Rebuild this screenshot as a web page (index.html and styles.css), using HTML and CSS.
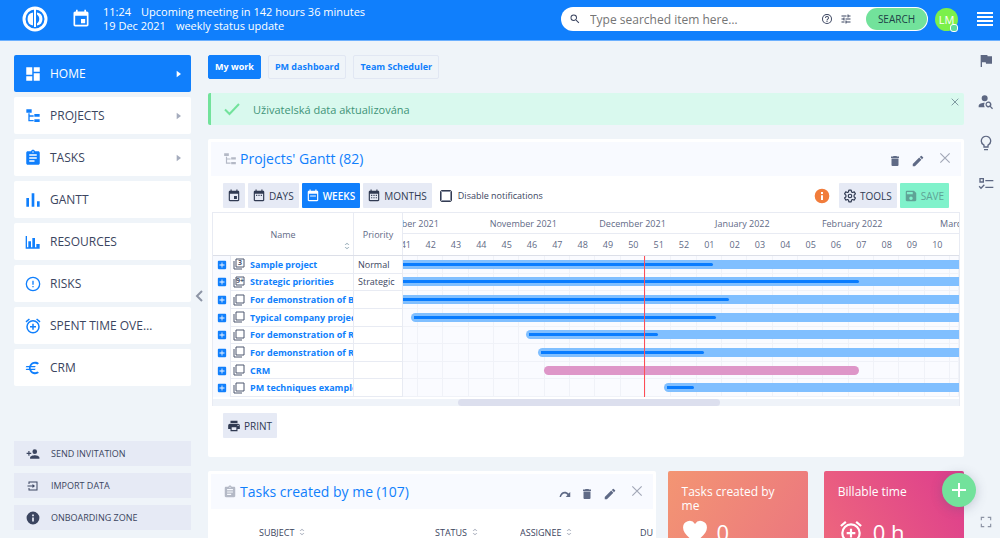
FILE: index.html
```html
<!DOCTYPE html>
<html lang="en">
<head>
<meta charset="utf-8">
<meta name="viewport" content="width=device-width, initial-scale=1">
<title>Home - My work</title>
<link rel="stylesheet" href="styles.css">
</head>
<body>
<svg class="sprite" aria-hidden="true">
  <symbol id="i-event" viewBox="0 0 24 24"><path d="M17 12h-5v5h5v-5zM16 1v2H8V1H6v2H5c-1.1 0-2 .9-2 2v14c0 1.100.9 2 2 2h14c1.100 0 2-.9 2-2V5c0-1.100-.9-2-2-2h-1V1h-2zm3 18H5V8h14v11z"/></symbol>
  <symbol id="i-days" viewBox="0 0 24 24"><path d="M16 1v2H8V1H6v2H5c-1.1 0-2 .9-2 2v14c0 1.100.9 2 2 2h14c1.100 0 2-.9 2-2V5c0-1.100-.9-2-2-2h-1V1h-2zm3 18H5V8h14v11zM7 10h2v2H7zm4 0h2v2h-2zm4 0h2v2h-2z"/></symbol>
  <symbol id="i-weeks" viewBox="0 0 24 24"><path d="M16 1v2H8V1H6v2H5c-1.1 0-2 .9-2 2v14c0 1.100.9 2 2 2h14c1.100 0 2-.9 2-2V5c0-1.100-.9-2-2-2h-1V1h-2zm3 18H5V8h14v11zM7 11h10v2H7z"/></symbol>
  <symbol id="i-months" viewBox="0 0 24 24"><path d="M16 1v2H8V1H6v2H5c-1.1 0-2 .9-2 2v14c0 1.100.9 2 2 2h14c1.100 0 2-.9 2-2V5c0-1.100-.9-2-2-2h-1V1h-2zm3 18H5V8h14v11zM7 10h2v2H7zm4 0h2v2h-2zm4 0h2v2h-2zM7 14h2v2H7zm4 0h2v2h-2zm4 0h2v2h-2z"/></symbol>
  <symbol id="i-search" viewBox="0 0 24 24"><path d="M15.500 14h-.79l-.28-.27A6.470 6.470 0 0 0 16 9.500 6.500 6.500 0 1 0 9.500 16c1.610 0 3.090-.59 4.230-1.570l.27.28v.79l5 4.990L20.490 19l-4.990-5zm-6 0C7.010 14 5 11.990 5 9.500S7.010 5 9.500 5 14 7.010 14 9.500 11.990 14 9.500 14z"/></symbol>
  <symbol id="i-help" viewBox="0 0 24 24"><path d="M11 18h2v-2h-2v2zm1-16a10 10 0 1 0 0 20 10 10 0 0 0 0-20zm0 18a8 8 0 1 1 0-16 8 8 0 0 1 0 16zm0-14a4 4 0 0 0-4 4h2c0-1.100.9-2 2-2s2 .9 2 2c0 2-3 1.750-3 5h2c0-2.250 3-2.500 3-5a4 4 0 0 0-4-4z"/></symbol>
  <symbol id="i-tune" viewBox="0 0 24 24"><path d="M3 17v2h6v-2H3zM3 5v2h10V5H3zm10 16v-2h8v-2h-8v-2h-2v6h2zM7 9v2H3v2h4v2h2V9H7zm14 4v-2H11v2h10zm-6-4h2V7h4V5h-4V3h-2v6z"/></symbol>
  <symbol id="i-dash" viewBox="0 0 24 24"><path d="M3 13h8V3H3v10zm0 8h8v-6H3v6zm10 0h8V11h-8v10zm0-18v6h8V3h-8z"/></symbol>
  <symbol id="i-tree" viewBox="0 0 24 24"><path d="M2 2h8v5H2zM14 9h8v4h-8zM14 17h8v4h-8zM5 8h2v3h6v2H7v5h6v2H5z"/></symbol>
  <symbol id="i-task" viewBox="0 0 24 24"><path d="M19 3h-4.180C14.400 1.840 13.300 1 12 1s-2.400.84-2.820 2H5c-1.100 0-2 .9-2 2v14c0 1.100.9 2 2 2h14c1.100 0 2-.9 2-2V5c0-1.100-.9-2-2-2zm-7 0a1 1 0 1 1 0 2 1 1 0 0 1 0-2zm2 14H7v-2h7v2zm3-4H7v-2h10v2zm0-4H7V7h10v2z"/></symbol>
  <symbol id="i-bars" viewBox="0 0 24 24"><path d="M2 9h4v13H2zM10 2h4v20h-4zM18 14h4v8h-4z"/></symbol>
  <symbol id="i-res" viewBox="0 0 24 24"><path d="M1 3h2v17h2V11h4v9h2V6h4v14h2v-5h5v7H1z"/></symbol>
  <symbol id="i-risk" viewBox="0 0 24 24"><path d="M11 15h2v2h-2zm0-8h2v6h-2zM12 1a11 11 0 1 0 0 22 11 11 0 0 0 0-22zm0 20a9 9 0 1 1 0-18 9 9 0 0 1 0 18z"/></symbol>
  <symbol id="i-alarm" viewBox="0 0 24 24"><path d="M7.880 3.390 6.600 1.860 2 5.710l1.290 1.530 4.590-3.850zM22 5.720l-4.600-3.860-1.290 1.530 4.600 3.860L22 5.720zM12 4a9 9 0 1 0 0 18 9 9 0 0 0 0-18zm0 16a7 7 0 1 1 0-14 7 7 0 0 1 0 14zm1-11h-2v3H8v2h3v3h2v-3h3v-2h-3V9z"/></symbol>
  <symbol id="i-euro" viewBox="0 0 24 24"><path d="M15 18.500A6.480 6.480 0 0 1 9.240 15H15l1-2H8.580a6.700 6.700 0 0 1 0-2H15l1-2H9.240a6.490 6.490 0 0 1 9.370-2.390L21 4.800A8.960 8.960 0 0 0 6.520 9H2l-1 2h5.060a9.300 9.300 0 0 0 0 2H2l-1 2h5.520A8.990 8.990 0 0 0 21 19.200l-2.400-1.800a6.400 6.400 0 0 1-3.600 1.100z"/></symbol>
  <symbol id="i-adduser" viewBox="0 0 24 24"><path d="M15 12a4 4 0 1 0 0-8 4 4 0 0 0 0 8zm-9-2V7H4v3H1v2h3v3h2v-3h3v-2H6zm9 4c-2.670 0-8 1.340-8 4v2h16v-2c0-2.660-5.330-4-8-4z"/></symbol>
  <symbol id="i-import" viewBox="0 0 24 24"><path d="M3 3h18v18H3v-5h2v3h14V5H5v3H3zM1 11h10V8l5 4-5 4v-3H1z"/></symbol>
  <symbol id="i-info" viewBox="0 0 24 24"><path d="M12 1a11 11 0 1 0 0 22 11 11 0 0 0 0-22zm1.500 17h-3v-7h3v7zm0-9h-3V6h3v3z"/></symbol>
  <symbol id="i-flag" viewBox="0 0 24 24"><path d="M14.400 5 14 3H4v18h2v-7h5.600l.4 2h9V5z"/></symbol>
  <symbol id="i-usersearch" viewBox="0 0 24 24"><path d="M10 11a4.500 4.500 0 1 0 0-9 4.500 4.500 0 0 0 0 9zM10 13c-4 0-9 1.500-9 5v2h9a7 7 0 0 1 0-7zM22.500 21.500l-3.100-3.200a4.500 4.500 0 1 0-1.400 1.300l3.100 3.200zM15.500 18a2.500 2.500 0 1 1 0-5 2.500 2.500 0 0 1 0 5z"/></symbol>
  <symbol id="i-bulb" viewBox="0 0 24 24"><path d="M9 21h6v2H9zM12 1a8 8 0 0 0-4 14.900V19h8v-3.100A8 8 0 0 0 12 1zm2.600 13.200-.6.400V17h-4v-2.400l-.6-.4a6 6 0 1 1 5.200 0z"/></symbol>
  <symbol id="i-checks" viewBox="0 0 24 24"><path d="M11 6h12v2H11zM11 16h12v2H11zM2 3h7v7H2zm2 2v3h3V5zM1 16l1.400-1.400L4.500 17 8.800 12.500 10.200 14 4.500 20z"/></symbol>
  <symbol id="i-full" viewBox="0 0 24 24"><path d="M3 3h6v2H5v4H3zM15 3h6v6h-2V5h-4zM3 15h2v4h4v2H3zM19 15h2v6h-6v-2h4z"/></symbol>
  <symbol id="i-trash" viewBox="0 0 24 24"><path d="M5 7h14v13a2 2 0 0 1-2 2H7a2 2 0 0 1-2-2zM4 3h4l1-1h6l1 1h4v3H4z"/></symbol>
  <symbol id="i-pen" viewBox="0 0 24 24"><path d="M3 17.250V21h3.750L17.810 9.940l-3.750-3.750L3 17.250zM20.710 7.040a1 1 0 0 0 0-1.410l-2.340-2.340a1 1 0 0 0-1.410 0l-1.830 1.830 3.750 3.750 1.830-1.830z"/></symbol>
  <symbol id="i-close" viewBox="0 0 24 24"><path d="M4 4 20 20M20 4 4 20" fill="none" stroke="currentColor" stroke-width="2"/></symbol>
  <symbol id="i-redo" viewBox="0 0 24 24"><path d="M1 18C3 6 14 5 19 11l3.500-3v10h-9l3.500-4C12 9 6 11 4 18z"/></symbol>
  <symbol id="i-gear" viewBox="0 0 24 24"><path d="M10 2h4l.6 3 1.800 1 2.900-1 2 3.400L19 10.500v3l2.300 2-2 3.500-2.900-1-1.800 1-.6 3h-4l-.6-3-1.800-1-2.900 1-2-3.500 2.300-2v-3l-2.300-2.100 2-3.400 2.900 1 1.800-1z" fill="none" stroke="currentColor" stroke-width="2" stroke-linejoin="round"/><circle cx="12" cy="12" r="3" fill="none" stroke="currentColor" stroke-width="2"/></symbol>
  <symbol id="i-save" viewBox="0 0 24 24"><path d="M17 3H5a2 2 0 0 0-2 2v14c0 1.100.9 2 2 2h14c1.100 0 2-.9 2-2V7l-4-4zm-5 16a3 3 0 1 1 0-6 3 3 0 0 1 0 6zm3-10H5V5h10v4z"/></symbol>
  <symbol id="i-print" viewBox="0 0 24 24"><path d="M19 8H5a3 3 0 0 0-3 3v6h4v4h12v-4h4v-6a3 3 0 0 0-3-3zm-3 11H8v-5h8v5zm3-7a1 1 0 1 1 0-2 1 1 0 0 1 0 2zm-1-9H6v4h12V3z"/></symbol>
  <symbol id="i-copy" viewBox="0 0 24 24"><path d="M6 2h16v16H6zM2 6v16h16" fill="none" stroke="currentColor" stroke-width="2" stroke-linejoin="round"/></symbol>
  <symbol id="i-plusbox" viewBox="0 0 24 24"><path d="M4 2h16a2 2 0 0 1 2 2v16a2 2 0 0 1-2 2H4a2 2 0 0 1-2-2V4a2 2 0 0 1 2-2zm7 4v5H6v2h5v5h2v-5h5v-2h-5V6z"/></symbol>
  <symbol id="i-sort" viewBox="0 0 24 24"><path d="M5 9l7-7 7 7h-3l-4-4-4 4zM5 15h3l4 4 4-4h3l-7 7z"/></symbol>
  <symbol id="i-tri" viewBox="0 0 24 24"><path d="M5 2l13 10L5 22z"/></symbol>
  <symbol id="i-heart" viewBox="0 0 24 24"><path d="M12 22C5 16 1 12.500 1 8a6 6 0 0 1 11-3.500A6 6 0 0 1 23 8c0 4.500-4 8-11 14z"/></symbol>
</svg>

<header class="topbar">
  <a class="logo" href="#" aria-label="Home"><svg viewBox="0 0 26 26"><circle cx="13" cy="13" r="11" fill="none" stroke="currentColor" stroke-width="3"/><path d="M11 6.500a6.600 6.600 0 0 0 0 13z"/><path d="M12 3h2v18h-2z"/><path d="M15 6.500a6.600 6.600 0 0 1 0 13v-2c3-2 3-7 0-9z"/></svg></a>
  <svg class="icon meeting-icon"><use href="#i-event"/></svg>
  <div class="meeting">
    <div><span>11:24</span><span>Upcoming meeting in 142 hours 36 minutes</span></div>
    <div><span>19 Dec 2021</span><span>weekly status update</span></div>
  </div>
  <form class="search">
    <svg class="icon s12"><use href="#i-search"/></svg>
    <input type="text" aria-label="Search" placeholder="Type searched item here…">
    <svg class="icon s12"><use href="#i-help"/></svg>
    <svg class="icon s12"><use href="#i-tune"/></svg>
    <button type="button" class="search-btn">SEARCH</button>
  </form>
  <button type="button" class="avatar">LM<span class="status"></span></button>
  <button type="button" class="burger" aria-label="Menu"><i></i><i></i><i></i><i></i></button>
</header>

<div class="layout">
  <nav class="sidebar">
    <a class="nav-item active" href="#"><svg class="icon s18"><use href="#i-dash"/></svg><span>HOME</span><svg class="icon s8"><use href="#i-tri"/></svg></a>
    <a class="nav-item" href="#"><svg class="icon s16"><use href="#i-tree"/></svg><span>PROJECTS</span><svg class="icon s8"><use href="#i-tri"/></svg></a>
    <a class="nav-item" href="#"><svg class="icon s18"><use href="#i-task"/></svg><span>TASKS</span><svg class="icon s8"><use href="#i-tri"/></svg></a>
    <a class="nav-item" href="#"><svg class="icon s16"><use href="#i-bars"/></svg><span>GANTT</span></a>
    <a class="nav-item" href="#"><svg class="icon s16"><use href="#i-res"/></svg><span>RESOURCES</span></a>
    <a class="nav-item" href="#"><svg class="icon s16"><use href="#i-risk"/></svg><span>RISKS</span></a>
    <a class="nav-item" href="#"><svg class="icon s18"><use href="#i-alarm"/></svg><span>SPENT TIME OVE…</span></a>
    <a class="nav-item" href="#"><svg class="icon s16"><use href="#i-euro"/></svg><span>CRM</span></a>
    <div class="side-foot">
      <a class="foot-item" href="#"><svg class="icon s14"><use href="#i-adduser"/></svg>SEND INVITATION</a>
      <a class="foot-item" href="#"><svg class="icon s12"><use href="#i-import"/></svg>IMPORT DATA</a>
      <a class="foot-item" href="#"><svg class="icon s14"><use href="#i-info"/></svg>ONBOARDING ZONE</a>
    </div>
  </nav>
  <button type="button" class="collapse" aria-label="Collapse sidebar"><svg viewBox="0 0 8 12"><path d="M7 1 2 6l5 5" fill="none" stroke="currentColor" stroke-width="2"/></svg></button>

  <main class="main">
    <div class="tabs">
      <a class="tab current" href="#">My work</a>
      <a class="tab" href="#">PM dashboard</a>
      <a class="tab" href="#">Team Scheduler</a>
    </div>

    <div class="notice">
      <svg class="check" viewBox="0 0 18 14"><path d="M2 7.500 6.500 12 16 2" fill="none" stroke="currentColor" stroke-width="2"/></svg>
      <span>Uživatelská data aktualizována</span>
      <button type="button" aria-label="Dismiss"><svg class="icon s10"><use href="#i-close"/></svg></button>
    </div>

    <section class="card">
      <header class="card-head">
        <svg class="icon s14 muted"><use href="#i-tree"/></svg>
        <h2><a href="#">Projects' Gantt (82)</a></h2>
        <div class="tools">
          <button type="button" aria-label="Delete"><svg class="icon s12"><use href="#i-trash"/></svg></button>
          <button type="button" aria-label="Edit"><svg class="icon s14"><use href="#i-pen"/></svg></button>
          <button type="button" class="x" aria-label="Close"><svg class="icon s14"><use href="#i-close"/></svg></button>
        </div>
      </header>
      <div class="toolbar">
        <button type="button" class="btn only" aria-label="Today"><svg class="icon s14"><use href="#i-event"/></svg></button>
        <button type="button" class="btn"><svg class="icon s14"><use href="#i-days"/></svg>DAYS</button>
        <button type="button" class="btn on"><svg class="icon s14"><use href="#i-weeks"/></svg>WEEKS</button>
        <button type="button" class="btn"><svg class="icon s14"><use href="#i-months"/></svg>MONTHS</button>
        <label class="check-label"><input type="checkbox">Disable notifications</label>
        <svg class="icon info"><use href="#i-info"/></svg>
        <button type="button" class="btn"><svg class="icon s14"><use href="#i-gear"/></svg>TOOLS</button>
        <button type="button" class="btn save" disabled><svg class="icon s14"><use href="#i-save"/></svg>SAVE</button>
      </div>

      <div class="gantt">
        <table class="names">
          <thead><tr><th>Name<svg class="icon s8 sort"><use href="#i-sort"/></svg></th><th>Priority</th></tr></thead>
          <tbody>
            <tr><td><svg class="icon s10"><use href="#i-plusbox"/></svg></td><td><span class="copy"><svg class="icon s12"><use href="#i-copy"/></svg><b>3</b></span><a href="#">Sample project</a></td><td>Normal</td></tr>
            <tr><td><svg class="icon s10"><use href="#i-plusbox"/></svg></td><td><span class="copy"><svg class="icon s12"><use href="#i-copy"/></svg><b>9+</b></span><a href="#">Strategic priorities</a></td><td>Strategic</td></tr>
            <tr><td><svg class="icon s10"><use href="#i-plusbox"/></svg></td><td><span class="copy"><svg class="icon s12"><use href="#i-copy"/></svg></span><a href="#">For demonstration of Budgets</a></td><td></td></tr>
            <tr><td><svg class="icon s10"><use href="#i-plusbox"/></svg></td><td><span class="copy"><svg class="icon s12"><use href="#i-copy"/></svg></span><a href="#">Typical company project</a></td><td></td></tr>
            <tr><td><svg class="icon s10"><use href="#i-plusbox"/></svg></td><td><span class="copy"><svg class="icon s12"><use href="#i-copy"/></svg></span><a href="#">For demonstration of Risks</a></td><td></td></tr>
            <tr><td><svg class="icon s10"><use href="#i-plusbox"/></svg></td><td><span class="copy"><svg class="icon s12"><use href="#i-copy"/></svg></span><a href="#">For demonstration of Resources</a></td><td></td></tr>
            <tr><td><svg class="icon s10"><use href="#i-plusbox"/></svg></td><td><span class="copy"><svg class="icon s12"><use href="#i-copy"/></svg></span><a href="#">CRM</a></td><td></td></tr>
            <tr><td><svg class="icon s10"><use href="#i-plusbox"/></svg></td><td><span class="copy"><svg class="icon s12"><use href="#i-copy"/></svg></span><a href="#">PM techniques example</a></td><td></td></tr>
          </tbody>
        </table>
        <div class="timeline">
          <div class="months"><span>October 2021</span><span>November 2021</span><span>December 2021</span><span>January 2022</span><span>February 2022</span><span>March 2022</span></div>
          <div class="weeks"><span>41</span><span>42</span><span>43</span><span>44</span><span>45</span><span>46</span><span>47</span><span>48</span><span>49</span><span>50</span><span>51</span><span>52</span><span>01</span><span>02</span><span>03</span><span>04</span><span>05</span><span>06</span><span>07</span><span>08</span><span>09</span><span>10</span><span></span></div>
          <div class="chart">
            <div class="gridlines"><i></i><i></i><i></i><i></i><i></i><i></i><i></i><i></i><i></i><i></i><i></i><i></i><i></i><i></i><i></i><i></i><i></i><i></i><i></i><i></i><i></i><i></i><i></i></div>
            <div class="lane"><div class="bar open" style="margin-left:0%;width:100%"><i style="width:55.8%"></i></div></div>
            <div class="lane"><div class="bar open" style="margin-left:0%;width:100%"><i style="width:82.1%"></i></div></div>
            <div class="lane"><div class="bar open" style="margin-left:0%;width:100%"><i style="width:58.7%"></i></div></div>
            <div class="lane"><div class="bar" style="margin-left:1.4%;width:98.6%"><i style="width:55.5%"></i></div></div>
            <div class="lane"><div class="bar" style="margin-left:22.2%;width:77.8%"><i style="width:30%"></i></div></div>
            <div class="lane"><div class="bar" style="margin-left:24.2%;width:75.8%"><i style="width:39%"></i></div></div>
            <div class="lane"><div class="bar pink" style="margin-left:25.4%;width:56.7%"></div></div>
            <div class="lane"><div class="bar" style="margin-left:47%;width:53%"><i style="width:9%"></i></div></div>
            <div class="today" style="left:43.4%"></div>
          </div>
        </div>
        <div class="scroll"><div style="margin-left:32.8%;width:35.2%"></div></div>
      </div>
      <div class="card-foot"><button type="button" class="btn"><svg class="icon s14"><use href="#i-print"/></svg>PRINT</button></div>
    </section>

    <div class="row">
      <section class="card tasks">
        <header class="card-head">
          <svg class="icon s14 muted"><use href="#i-task"/></svg>
          <h2><a href="#">Tasks created by me (107)</a></h2>
          <div class="tools">
            <button type="button" aria-label="Move"><svg class="icon s12"><use href="#i-redo"/></svg></button>
            <button type="button" aria-label="Delete"><svg class="icon s12"><use href="#i-trash"/></svg></button>
            <button type="button" aria-label="Edit"><svg class="icon s14"><use href="#i-pen"/></svg></button>
            <button type="button" class="x" aria-label="Close"><svg class="icon s14"><use href="#i-close"/></svg></button>
          </div>
        </header>
        <table class="task-table"><thead><tr><th>SUBJECT<svg class="icon s8"><use href="#i-sort"/></svg></th><th>STATUS<svg class="icon s8"><use href="#i-sort"/></svg></th><th>ASSIGNEE<svg class="icon s8"><use href="#i-sort"/></svg></th><th>DUE DATE</th></tr></thead></table>
      </section>
      <div class="stats">
        <section class="stat coral"><h3>Tasks created by me</h3><p><svg class="icon s26"><use href="#i-heart"/></svg>0</p></section>
        <section class="stat rose"><h3>Billable time</h3><p class="low"><svg class="icon s26"><use href="#i-alarm"/></svg>0 h</p></section>
      </div>
    </div>
  </main>

  <aside class="rail">
    <button type="button" aria-label="Flag"><svg class="icon s16"><use href="#i-flag"/></svg></button>
    <button type="button" aria-label="Find user"><svg class="icon s16"><use href="#i-usersearch"/></svg></button>
    <button type="button" aria-label="Ideas"><svg class="icon s16"><use href="#i-bulb"/></svg></button>
    <button type="button" aria-label="To do"><svg class="icon s16"><use href="#i-checks"/></svg></button>
    <button type="button" class="full" aria-label="Full screen"><svg class="icon s14"><use href="#i-full"/></svg></button>
  </aside>
</div>
<button type="button" class="fab" aria-label="Add"><svg viewBox="0 0 14 14"><path d="M7 0v14M0 7h14" fill="none" stroke="currentColor" stroke-width="2"/></svg></button>
</body>
</html>
```
FILE: styles.css
```css
:root {
  --blue: #107ffc;
  --ink: #3b4560;
  --muted: #5f6a86;
  --line: #e8ebf3;
  --btn: #e6eaf5;
  --green: #72e29b;
}
* { box-sizing: border-box; }
body {
  margin: 0;
  height: 100vh;
  overflow: hidden;
  display: flex;
  flex-direction: column;
  background: #eff4f9;
  color: var(--ink);
  font-family: "Open Sans", "Noto Sans", sans-serif;
  font-size: 11px;
}
button { border: 0; padding: 0; background: none; color: inherit; font: inherit; cursor: pointer; }
a { color: inherit; text-decoration: none; }
h2, h3, p { margin: 0; font-weight: 400; }
.sprite { position: absolute; width: 0; height: 0; }
.icon { fill: currentColor; flex: none; display: block; }
.s8 { width: 8px; height: 8px; }
.s10 { width: 10px; height: 10px; }
.s12 { width: 12px; height: 12px; }
.s14 { width: 14px; height: 14px; }
.s16 { width: 16px; height: 16px; }
.s18 { width: 18px; height: 18px; }
.s26 { width: 26px; height: 26px; }

.topbar {
  flex: none;
  height: 41px;
  display: flex;
  align-items: center;
  padding: 0 7px 2px 22px;
  background: var(--blue);
  border-bottom: 1px solid #6cb0ff;
  color: #fff;
}
.logo { width: 26px; height: 26px; }
.logo svg { display: block; fill: #fff; }
.meeting-icon { width: 20px; height: 20px; margin-left: 23px; }
.meeting { margin-left: 12px; line-height: 14px; font-size: 11px; font-weight: 600; }
.meeting div { display: flex; gap: 10px; white-space: nowrap; font-weight: 500; }
.search {
  margin-left: auto;
  width: 367px;
  height: 24px;
  display: flex;
  align-items: center;
  gap: 7px;
  padding: 1px 1px 1px 8px;
  background: #fff;
  border-radius: 12px;
  color: var(--ink);
}
.search input {
  flex: 1;
  min-width: 0;
  border: 0;
  padding: 0 0 0 2px;
  background: none;
  font: inherit;
  font-size: 12px;
  outline: 0;
}
.search input::placeholder { color: #757575; opacity: 1; }
.search-btn { width: 61px; height: 22px; margin-left: 7px; border-radius: 11px; background: var(--green); color: #1d3f48; font-size: 10px; font-weight: 500; }
.avatar { position: relative; width: 23px; height: 23px; margin-left: 7px; border-radius: 50%; background: #7cf04a; color: #fff; font-size: 11px; }
.status { position: absolute; right: 0; bottom: -1px; width: 8px; height: 8px; border: 1px solid #fff; border-radius: 3px; background: #5fdc9c; }
.burger { display: grid; gap: 2px; width: 16px; margin-left: 19px; }
.burger i { height: 2px; background: #fff; }

.layout { flex: 1; min-height: 0; display: flex; }
.sidebar { flex: none; width: 191px; padding: 14px 0 8px 14px; display: flex; flex-direction: column; gap: 5px; }
.nav-item {
  height: 37px;
  display: grid;
  grid-template-columns: 18px 1fr 8px;
  align-items: center;
  justify-items: start;
  column-gap: 8px;
  padding: 0 8px 0 10px;
  background: #fff;
  border-radius: 2px;
  font-size: 12px;
  font-weight: 500;
  white-space: nowrap;
}
.nav-item .icon { color: var(--blue); justify-self: center; }
.nav-item .s8 { color: #a5acbd; }
.nav-item.active, .nav-item.active .icon { color: #fff; }
.nav-item.active { background: var(--blue); }
.side-foot { margin-top: auto; display: flex; flex-direction: column; gap: 7px; }
.foot-item {
  height: 25px;
  display: grid;
  grid-template-columns: 14px 1fr;
  column-gap: 11px;
  align-items: center;
  padding-left: 12px;
  background: var(--btn);
  font-size: 9px;
  font-weight: 500;
}
.foot-item .icon { justify-self: center; }
.collapse { flex: none; width: 17px; color: #8d94a5; }
.collapse svg { width: 8px; height: 12px; display: block; margin: 12px 0 0 4px; }

.main { flex: 1; min-width: 0; padding-top: 14px; display: flex; flex-direction: column; gap: 14px; }
.main > * { flex: none; }
.tabs { display: flex; gap: 7px; }
.tab { height: 24px; line-height: 22px; padding: 0 6px; border: 1px solid #e1e7f3; border-radius: 2px; color: var(--blue); font-size: 9px; font-weight: 700; }
.tab.current { background: var(--blue); border-color: var(--blue); color: #fff; }
.notice { height: 32px; display: flex; align-items: center; gap: 12px; padding: 0 4px 0 12px; background: #d9f9ee; border-left: 3px solid var(--green); border-radius: 2px; color: #3f9478; font-size: 11px; font-weight: 500; }
.check { width: 18px; height: 14px; color: var(--green); }
.notice button { margin: 4px 0 auto auto; color: #6d8791; }

.card { background: #fff; border-radius: 2px; padding: 3px; min-width: 0; }
.card-head { height: 34px; display: flex; align-items: center; gap: 3px; padding: 0 8px 0 12px; background: #f8faff; color: var(--muted); }
.card-head h2 { color: var(--blue); font-size: 14px; font-weight: 500; line-height: 20px; white-space: nowrap; }
.muted { color: #b4b9c6; }
.tools { margin-left: auto; display: flex; align-items: center; gap: 10px; padding-top: 4px; }
.tools .x { margin: -6px 1px 0 3px; color: #a2a8b7; }

.toolbar { display: flex; align-items: center; gap: 3px; padding: 7px 12px 4px; }
.btn { height: 25px; display: inline-flex; align-items: center; gap: 3px; padding: 0 5px 0 4px; background: var(--btn); border-radius: 1px; font-size: 10px; font-weight: 500; color: #303a52; }
.btn.only { padding: 0 4px; }
.btn.on { background: var(--blue); color: #fff; font-weight: 600; }
.btn.save { background: #80f2cb; color: #5fa396; }
.check-label { display: flex; align-items: center; gap: 6px; margin: 0 auto 0 5px; font-size: 9px; font-weight: 500; white-space: nowrap; }
.check-label input { appearance: none; width: 12px; height: 12px; margin: 0; border: 1px solid #333c52; border-radius: 2px; outline: 1px solid #8a91a3; outline-offset: -2px; background: #fff; }
.info { width: 16px; height: 16px; margin-right: 6px; color: #f17c3b; }

.gantt {
  margin: 0 1px;
  display: grid;
  grid-template-columns: 190px minmax(0, 1fr);
  border: 1px solid var(--line);
  border-bottom: 0;
  font-size: 9px;
  font-weight: 500;
}
.names { display: block; }
.names thead, .names th, .names td { display: block; }
.names thead { height: 43px; border-bottom: 1px solid #dcdfe8; }
.names tr { display: grid; }
.names thead tr { grid-template-columns: 141px 49px; height: 42px; }
.names th { display: flex; align-items: center; justify-content: center; position: relative; padding: 0; border-right: 1px solid var(--line); font-weight: 500; color: var(--muted); }
.names .sort { position: absolute; right: 2px; bottom: 5px; color: #8fa6b3; }
.names tbody { display: grid; grid-template-rows: repeat(8, 1fr); height: 141px; }
.names tbody tr { grid-template-columns: 18px 123px 49px; min-height: 0; }
.names td { display: flex; align-items: center; min-width: 0; overflow: hidden; padding: 0; border-right: 1px solid var(--line); border-bottom: 1px solid var(--line); white-space: nowrap; }
.names td:first-child { justify-content: center; background: #f8faff; color: var(--blue); border-bottom: 0; }
.names td:nth-child(2) { gap: 5px; padding-left: 2px; }
.names td:nth-child(3) { padding-left: 4px; }
.names td a { color: var(--blue); font-weight: 700; }
.copy { position: relative; flex: none; color: #4c566f; }
.copy b { position: absolute; top: 0; left: 3px; width: 8px; text-align: center; font-size: 7px; line-height: 10px; }

.timeline { min-width: 0; color: var(--muted); }
.months, .weeks, .gridlines { display: grid; }
.months { height: 21px; grid-template-columns: 66fr 109fr 110fr 110fr 110fr 52fr; border-bottom: 1px solid var(--line); overflow: hidden; }
.months span, .weeks span { display: flex; align-items: center; justify-content: center; min-width: 0; overflow: hidden; white-space: nowrap; }
.months span:first-child { justify-content: flex-end; padding-right: 30px; }
.months span:last-child { justify-content: flex-start; padding-left: 33px; }
.weeks, .gridlines { grid-template-columns: 15px repeat(21, minmax(0, 1fr)) 9px; }
.weeks { height: 22px; border-bottom: 1px solid #dcdfe8; }
.weeks span:first-child { justify-content: flex-end; padding-right: 7px; }
.chart { position: relative; height: 141px; display: grid; grid-template-rows: repeat(8, 1fr); background: #fafbff; overflow: hidden; }
.gridlines { position: absolute; inset: 0; }
.gridlines i { border-right: 1px solid #f0f2f8; }
.lane { min-height: 0; display: flex; align-items: center; border-bottom: 1px solid #f0f2f8; }
.bar { position: relative; height: 9px; display: flex; align-items: center; padding-left: 3px; background: #80bfff; border-radius: 5px 0 0 5px; }
.bar.open { padding-left: 0; border-radius: 0; }
.bar.pink { background: #de96c8; border-radius: 5px; }
.bar i { height: 3px; background: #087cff; border-radius: 0 2px 2px 0; }
.today { position: absolute; top: 0; bottom: 0; width: 1px; background: #ff4d55; }
.scroll { grid-column: 1 / -1; margin-top: 2px; background: #eff3f9; }
.scroll div { height: 7px; border-radius: 4px; background: #dcdfee; }
.card-foot { padding: 7px 12px 16px; }
.card-foot .btn { vertical-align: top; }

.row { display: grid; grid-template-columns: minmax(0, 447fr) minmax(0, 296fr); gap: 12px; }
.tasks { overflow: hidden; }
.stats { display: flex; gap: 16px; min-width: 0; }
.tasks .card-head { height: 35px; }
.task-table { width: 100%; height: 46px; table-layout: fixed; border-collapse: collapse; font-size: 9px; }
.task-table th { padding: 0; text-align: left; font-weight: 500; white-space: nowrap; overflow: hidden; }
.task-table th:nth-child(1) { width: 224px; padding-left: 48px; }
.task-table th:nth-child(2) { width: 85px; }
.task-table th:nth-child(3) { width: 120px; }
.task-table .icon { display: inline-block; margin-left: 4px; color: #a2a8b7; }
.stat { flex: 1; height: 100px; padding: 14px 14px 0; border-radius: 2px; color: #fff; }
.coral { background: linear-gradient(120deg, #f39573, #eb7480); }
.rose { background: linear-gradient(60deg, #ef6a7c, #dd3d8d); }
.stat h3 { font-size: 12px; line-height: 14px; font-weight: 500; }
.stat p { display: flex; align-items: center; gap: 9px; font-size: 22px; line-height: 38px; }
.stat .low { padding-top: 14px; }

.rail { flex: none; width: 36px; padding: 12px 0 9px 7px; display: flex; flex-direction: column; align-items: center; gap: 25px; color: #5d6782; }
.rail .full { margin-top: auto; color: #8d94a5; }
.fab { position: fixed; right: 24px; bottom: 31px; width: 34px; height: 34px; border-radius: 50%; background: var(--green); color: #fff; box-shadow: 0 2px 12px rgba(80, 90, 120, .3); }
.fab svg { width: 14px; height: 14px; display: block; margin: auto; }
```
